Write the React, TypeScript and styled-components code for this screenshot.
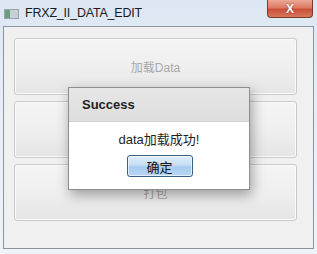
import React from 'react';
import styled, { createGlobalStyle } from 'styled-components';

const GlobalStyle = createGlobalStyle`
  html, body {
    margin: 0;
    padding: 0;
    background: #ffffff;
  }
  body {
    font-family: "Liberation Sans", "Noto Sans CJK SC", sans-serif;
  }
`;

const WindowFrame = styled.div`
  position: relative;
  width: 317px;
  height: 254px;
  box-sizing: border-box;
  padding: 0 3px 5px 3px;
  display: flex;
  flex-direction: column;
  background: linear-gradient(180deg, #dce7f3 0%, #e7eef7 40%, #eef3f9 100%);
  overflow: hidden;
`;

const TitleBar = styled.div`
  height: 26px;
  display: flex;
  align-items: center;
  position: relative;
  flex-shrink: 0;
`;

const AppIcon = styled.div`
  width: 15px;
  height: 10px;
  margin: 1px 6px 0 1px;
  background: linear-gradient(90deg, #6a9f7a 0 5px, #c9cfd6 5px 100%);
  border: 1px solid #9aa4ae;
  box-sizing: border-box;
`;

const Title = styled.span`
  font-size: 12.5px;
  color: #1a1a1a;
  letter-spacing: -0.2px;
`;

const CloseButton = styled.div`
  position: absolute;
  right: 1px;
  top: 0;
  width: 46px;
  height: 18px;
  border: 1px solid #7a3a2e;
  border-top: none;
  border-radius: 0 0 4px 4px;
  background: linear-gradient(180deg, #eaa996 0%, #dc7a63 45%, #c9503a 55%, #d9785c 100%);
  display: flex;
  align-items: center;
  justify-content: center;
  box-sizing: border-box;
  color: #ffffff;
  font-weight: bold;
  font-size: 12px;
  text-shadow: 0 0 2px #7a2a1c;
`;

const Client = styled.div`
  flex: 1;
  background: #f0f0f0;
  border: 1px solid #8c959f;
  display: flex;
  flex-direction: column;
  gap: 6px;
  padding: 11px 16px 0 10px;
  box-sizing: border-box;
`;

const BigButton = styled.div`
  height: 57px;
  box-sizing: border-box;
  border: 1px solid #c9c9c9;
  border-radius: 3px;
  background: linear-gradient(180deg, #f4f4f4 0%, #efefef 50%, #e5e5e5 100%);
  box-shadow: inset 0 0 0 1px #fbfbfb;
  display: flex;
  align-items: center;
  justify-content: center;
  font-size: 12px;
  color: #a8a8a8;
`;

const Dialog = styled.div`
  position: absolute;
  left: 68px;
  top: 87px;
  width: 182px;
  height: 103px;
  box-sizing: border-box;
  border: 1px solid #8e8e8e;
  background: #ffffff;
  box-shadow: 2px 5px 12px rgba(0, 0, 0, 0.35);
  display: flex;
  flex-direction: column;
`;

const DialogHeader = styled.div`
  height: 33px;
  flex-shrink: 0;
  background: linear-gradient(180deg, #e6e6e6 0%, #dedede 100%);
  border-bottom: 1px solid #d0d0d0;
  display: flex;
  align-items: center;
  padding-left: 13px;
  font-size: 13px;
  font-weight: bold;
  color: #222222;
`;

const DialogBody = styled.div`
  flex: 1;
  display: flex;
  flex-direction: column;
  align-items: center;
  padding-top: 7px;
  gap: 7px;
`;

const Message = styled.div`
  font-size: 13px;
  color: #1e1e1e;
`;

const OkButton = styled.div`
  width: 66px;
  height: 22px;
  box-sizing: border-box;
  border: 1px solid #3c5f84;
  border-radius: 3px;
  background: linear-gradient(180deg, #e2effb 0%, #c4ddf5 45%, #a8cbee 55%, #b8d6f3 100%);
  box-shadow: inset 0 0 0 1px rgba(255, 255, 255, 0.6);
  display: flex;
  align-items: center;
  justify-content: center;
  font-size: 13px;
  color: #111111;
  margin-left: 1px;
`;

export default function App() {
  return (
    <>
      <GlobalStyle />
      <WindowFrame>
        <TitleBar>
          <AppIcon />
          <Title>FRXZ_II_DATA_EDIT</Title>
          <CloseButton>X</CloseButton>
        </TitleBar>
        <Client>
          <BigButton>加载Data</BigButton>
          <BigButton />
          <BigButton>打包</BigButton>
        </Client>
        <Dialog>
          <DialogHeader>Success</DialogHeader>
          <DialogBody>
            <Message>data加载成功!</Message>
            <OkButton>确定</OkButton>
          </DialogBody>
        </Dialog>
      </WindowFrame>
    </>
  );
}
